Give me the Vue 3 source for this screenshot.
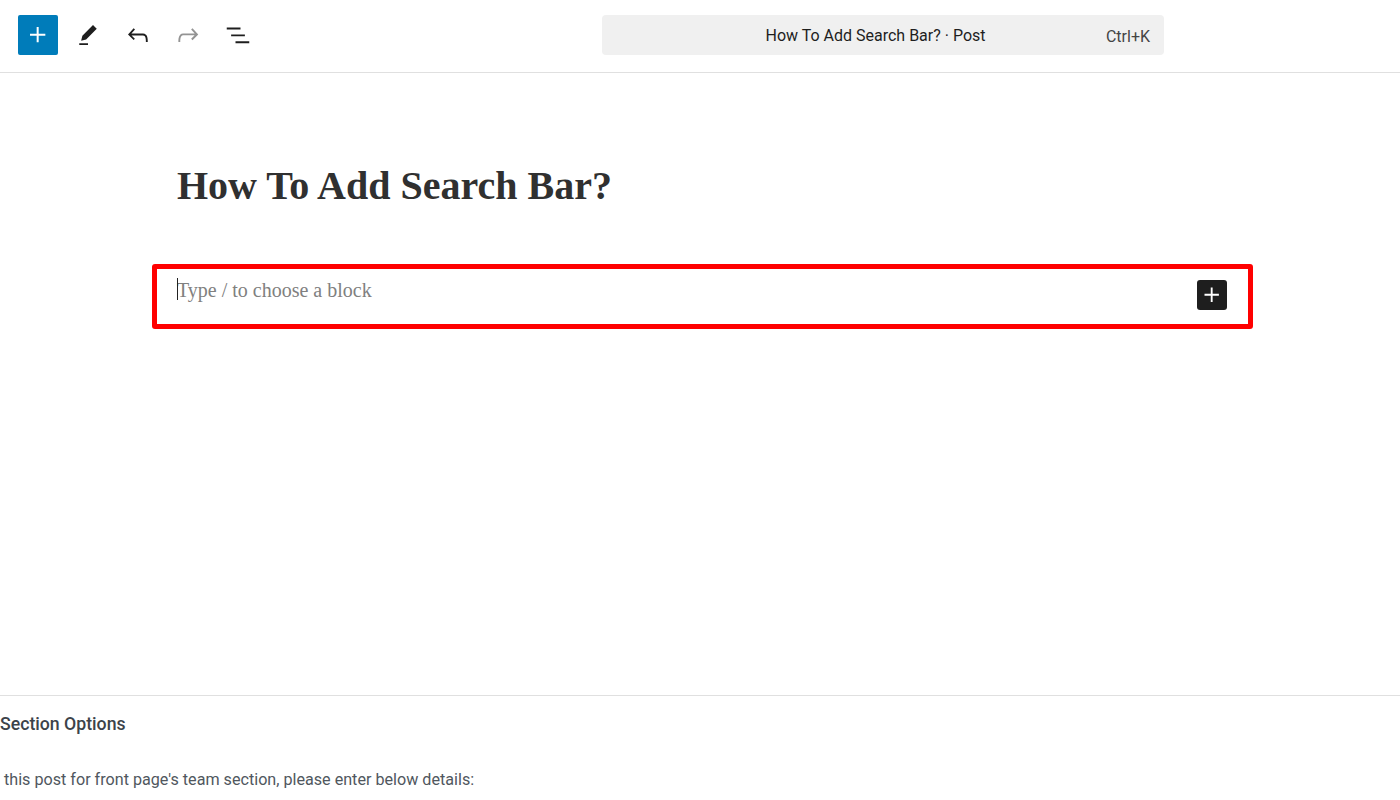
<script setup>
const tools = [
  { id: 'edit', d: 'm19 7-3-3-8.5 8.5-1 4 4-1L19 7Zm-7 11.5H5V20h7v-1.5Z', muted: false },
  { id: 'undo', d: 'M18.3 11.7c-.6-.6-1.4-.9-2.3-.9H6.7l2.9-3.3-1.1-1-4.5 5L8.5 16l1-1-2.7-2.7H16c.5 0 .9.2 1.3.5 1 1 1 3.4 1 4.5v.3h1.5v-.2c0-1.5 0-4.3-1.5-5.7z', muted: false },
  { id: 'redo', d: 'M15.6 6.5l-1.1 1 2.9 3.3H8c-.9 0-1.7.3-2.3.9-1.4 1.5-1.4 4.2-1.4 5.6v.2h1.5v-.3c0-1.1 0-3.5 1-4.5.3-.3.7-.5 1.3-.5h9.2L14.5 15l1.1 1.1 4.6-4.6-4.6-5z', muted: true },
  { id: 'list', d: 'M3 6h11v1.5H3V6Zm3.5 5.5h11V13h-11v-1.5ZM21 17H10v1.5h11V17Z', muted: false },
]
const plus = 'M11 12.5V17.5H12.5V12.5H17.5V11H12.5V6H11V11H6V12.5H11Z'
</script>

<template>
  <div class="page">
    <header class="topbar">
      <div class="left">
        <button class="inserter" type="button" aria-label="Add block">
          <svg viewBox="0 0 24 24" width="32" height="32"><path :d="plus" /></svg>
        </button>
        <button v-for="t in tools" :key="t.id" class="tool" :class="{ muted: t.muted }" type="button" :aria-label="t.id">
          <svg viewBox="0 0 24 24" width="30" height="30"><path :d="t.d" /></svg>
        </button>
      </div>
      <div class="command">
        <span class="command-title">How To Add Search Bar? · Post</span>
        <span class="command-key">Ctrl+K</span>
      </div>
    </header>

    <main class="canvas">
      <h1 class="title">How To Add Search Bar?</h1>
      <div class="highlight">
        <p class="placeholder"><span class="caret"></span>Type / to choose a block</p>
        <button class="block-add" type="button" aria-label="Add block">
          <svg viewBox="0 0 24 24" width="32" height="32"><path :d="plus" /></svg>
        </button>
      </div>
    </main>

    <section class="meta">
      <h2 class="meta-title">Section Options</h2>
      <p class="meta-text">this post for front page's team section, please enter below details:</p>
    </section>
  </div>
</template>

<style>
html, body { margin: 0; background: #fff; }
</style>

<style scoped>
.page {
  width: 1400px;
  height: 800px;
  overflow: hidden;
  display: flex;
  flex-direction: column;
  background: #fff;
  font-family: Roboto, "Open Sans", sans-serif;
}
button { border: 0; padding: 0; background: none; display: flex; align-items: center; justify-content: center; }
.topbar {
  height: 72px;
  flex: none;
  display: flex;
  align-items: flex-start;
  border-bottom: 1px solid #e0e0e0;
}
.left {
  display: flex;
  align-items: center;
  width: 602px;
  padding: 15px 0 0 18px;
  box-sizing: border-box;
  gap: 10px;
}
.inserter {
  width: 40px;
  height: 40px;
  background: #007cba;
  border-radius: 2px;
}
.inserter svg { fill: #fff; }
.tool { width: 40px; height: 40px; }
.tool svg { fill: #1e1e1e; }
.tool.muted svg { fill: #949494; }
.command {
  margin-top: 15px;
  width: 562px;
  height: 40px;
  background: #f0f0f0;
  border-radius: 4px;
  display: flex;
  align-items: center;
  position: relative;
  justify-content: center;
  color: #1e1e1e;
  font-size: 16px;
  box-sizing: border-box;
}
.command-title { margin-right: 15px; position: relative; top: 0; }
.command-key {
  position: absolute;
  right: 14px;
  top: 12px;
  color: #444;
}
.canvas {
  flex: 1;
  display: flex;
  flex-direction: column;
  padding: 0 147px 0 152px;
}
.title {
  margin: 89px 0 0 25px;
  font: bold 40px/48px "Liberation Serif", serif;
  color: #303030;
}
.highlight {
  margin-top: 54px;
  height: 65px;
  box-sizing: border-box;
  border: 5px solid #ff0000;
  border-radius: 3px;
  display: flex;
  justify-content: space-between;
  padding: 0 21px 0 20px;
}
.placeholder {
  margin: 7px 0 0;
  position: relative;
  font: 20px/28px "Liberation Serif", serif;
  color: #808080;
}
.caret {
  position: absolute;
  left: 0;
  top: 2px;
  width: 1px;
  height: 22px;
  background: #222;
}
.block-add {
  margin-top: 11px;
  width: 30px;
  height: 30px;
  background: #1e1e1e;
  border-radius: 3px;
}
.block-add svg { fill: #fff; }
.meta {
  flex: none;
  height: 105px;
  box-sizing: border-box;
  border-top: 1px solid #e0e0e0;
  color: #50575e;
}
.meta-title {
  margin: 17px 0 0;
  font-size: 17.7px;
  line-height: 22px;
  font-weight: 500;
  color: #3c434a;
}
.meta-text {
  margin: 34px 0 0 4px;
  font-size: 16.15px;
  line-height: 22px;
}
</style>
